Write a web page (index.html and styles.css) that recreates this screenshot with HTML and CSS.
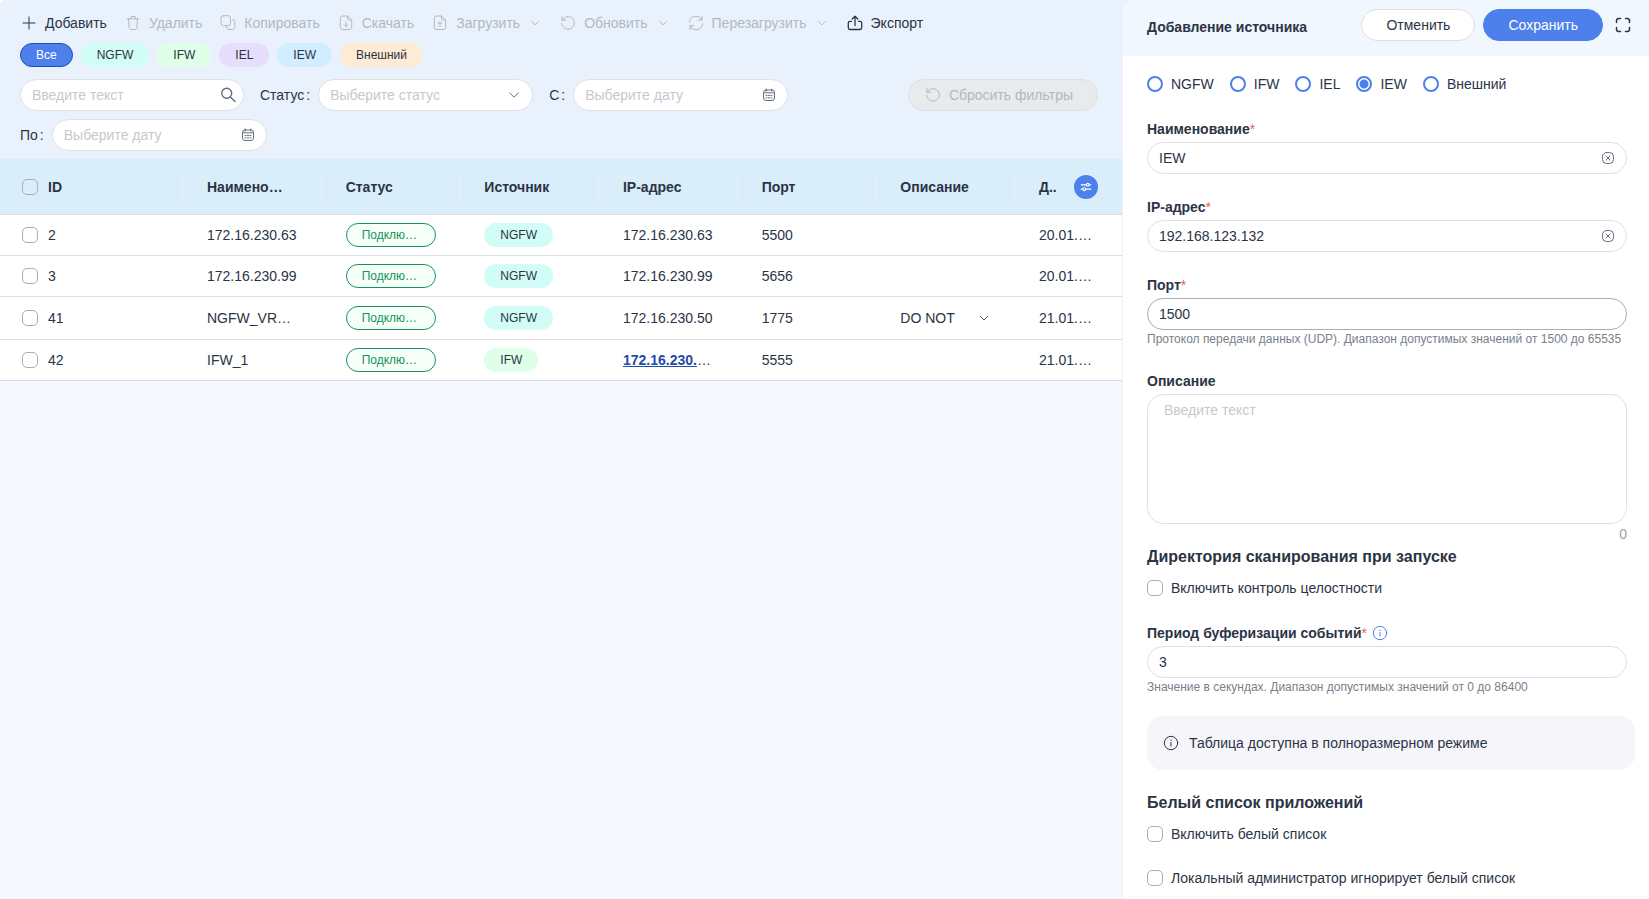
FILE: index.html
```html
<!DOCTYPE html>
<html lang="ru">
<head>
    <meta charset="UTF-8">
    <meta name="viewport" content="width=device-width, initial-scale=1.0">
    <title>Источники</title>
    <link rel="stylesheet" href="styles.css">
</head>
<body>
    <svg class="sprite" aria-hidden="true">
        <symbol id="plus" viewBox="0 0 16 16"><path d="M8 2v12M2 8h12"/></symbol>
        <symbol id="trash" viewBox="0 0 16 16"><path d="M2.200 3.800h11.600M5.400 3.600l.7-2.100h3.800l.7 2.100M3.500 4l.7 8.600c.1 1.200.8 1.900 2 1.900h3.600c1.200 0 1.900-.7 2-1.900L12.500 4"/></symbol>
        <symbol id="copy" viewBox="0 0 16 16"><rect x="1" y=".7" width="9.500" height="10" rx="2.500"/><path d="M12.500 4.900c1.500 0 2.300.8 2.300 2.300v4.600c0 1.700-.9 2.600-2.600 2.600H9c-1.700 0-2.700-.9-2.700-2.600v-1"/></symbol>
        <symbol id="file-down" viewBox="0 0 16 16"><path d="M9.500 1H5C3.200 1 2.300 1.900 2.300 3.700v8.100c0 1.800.9 2.700 2.700 2.700h6c1.800 0 2.700-.9 2.700-2.700V5L9.500 1v2.400c0 1.100.5 1.600 1.600 1.600h2.600M8 7v4.600M6.300 9.900L8 11.600l1.700-1.700"/></symbol>
        <symbol id="file-up" viewBox="0 0 16 16"><path d="M9.500 1H5C3.200 1 2.300 1.900 2.300 3.700v8.100c0 1.800.9 2.700 2.700 2.700h6c1.800 0 2.700-.9 2.700-2.700V5L9.500 1v2.400c0 1.100.5 1.600 1.600 1.600h2.600M8 11.600V7M6.300 8.700L8 7l1.700 1.700"/></symbol>
        <symbol id="undo" viewBox="0 0 16 16"><path d="M2 1.500v3.800h3.800M2.300 5.200A6.300 6.300 0 1 1 1.700 8.300"/></symbol>
        <symbol id="sync" viewBox="0 0 16 16"><path d="M1.500 7.300A6.400 6.400 0 0 1 13.700 5M14 1.500V5.200h-3.700M14.500 8.700A6.400 6.400 0 0 1 2.300 11M2 14.500v-3.700h3.700"/></symbol>
        <symbol id="export" viewBox="0 0 16 16"><path d="M4.500 6.300H3c-1.100 0-1.700.6-1.700 1.700v4.800c0 1.100.6 1.700 1.700 1.700h10c1.100 0 1.700-.6 1.700-1.700V8c0-1.100-.6-1.700-1.700-1.700h-1.500M8 10.500V1.500M5.200 4L8 1.300 10.800 4" stroke-width="1.300"/></symbol>
        <symbol id="chevron" viewBox="0 0 16 16"><path d="M3.800 6L8 10.200 12.200 6"/></symbol>
        <symbol id="search" viewBox="0 0 16 16"><circle cx="6.700" cy="6.200" r="5" stroke-width="1.400"/><path d="M10.400 9.900l4.600 4.600" stroke-width="1.400"/></symbol>
        <symbol id="calendar" viewBox="0 0 16 16"><rect x="2.500" y="3" width="11" height="10.500" rx="2.500"/><path d="M2.500 5.800h11M5.200 2V4M10.800 2V4"/><path d="M5 8.400h1.200M7.400 8.400h1.200M9.800 8.400H11M5 10.900h1.200M7.400 10.900h1.200M9.800 10.900H11"/></symbol>
        <symbol id="clear" viewBox="0 0 16 16"><rect x="2.500" y="2.500" width="11" height="11" rx="4"/><path d="M6 6l4 4M10 6l-4 4"/></symbol>
        <symbol id="sliders" viewBox="0 0 16 16"><path d="M2.500 5.500H8M12 5.500h1.500M2.500 10.500H4M8 10.500h5.500"/><circle cx="10" cy="5.500" r="1.600"/><circle cx="6" cy="10.500" r="1.600"/></symbol>
        <symbol id="expand" viewBox="0 0 16 16"><path d="M1.500 5.500V3.800c0-1.500.8-2.300 2.300-2.300h1.700M10.500 1.500h1.700c1.500 0 2.300.8 2.300 2.300v1.700M14.500 10.500v1.700c0 1.500-.8 2.300-2.300 2.300h-1.700M5.500 14.500H3.800c-1.500 0-2.300-.8-2.300-2.300v-1.700"/></symbol>
        <symbol id="info" viewBox="0 0 16 16"><circle cx="8" cy="8" r="6.700"/><path d="M8 7.300v3.700M8 4.900v.6"/></symbol>
    </svg>

    <div class="app">
        <main class="main">
            <div class="controls">
                <div class="toolbar">
                    <button class="tool" type="button"><svg class="icon"><use href="#plus"/></svg>Добавить</button>
                    <button class="tool" type="button" disabled><svg class="icon"><use href="#trash"/></svg>Удалить</button>
                    <button class="tool" type="button" disabled><svg class="icon"><use href="#copy"/></svg>Копировать</button>
                    <button class="tool" type="button" disabled><svg class="icon"><use href="#file-down"/></svg>Скачать</button>
                    <button class="tool" type="button" disabled><svg class="icon"><use href="#file-up"/></svg>Загрузить<svg class="icon arrow"><use href="#chevron"/></svg></button>
                    <button class="tool" type="button" disabled><svg class="icon"><use href="#undo"/></svg>Обновить<svg class="icon arrow"><use href="#chevron"/></svg></button>
                    <button class="tool" type="button" disabled><svg class="icon"><use href="#sync"/></svg>Перезагрузить<svg class="icon arrow"><use href="#chevron"/></svg></button>
                    <button class="tool" type="button"><svg class="icon"><use href="#export"/></svg>Экспорт</button>
                </div>

                <div class="pills">
                    <button class="tag tag-active" type="button">Все</button>
                    <button class="tag tag-ngfw" type="button">NGFW</button>
                    <button class="tag tag-ifw" type="button">IFW</button>
                    <button class="tag tag-iel" type="button">IEL</button>
                    <button class="tag tag-iew" type="button">IEW</button>
                    <button class="tag tag-ext" type="button">Внешний</button>
                </div>

                <div class="filter-bar">
                    <div class="filters">
                        <div class="box search-box">
                            <input class="input" type="text" placeholder="Введите текст" aria-label="Введите текст">
                            <svg class="icon box-icon"><use href="#search"/></svg>
                        </div>
                        <div class="filter">
                            <label for="status">Статус<span class="colon">:</span></label>
                            <div class="box">
                                <select class="input select" id="status"><option>Выберите статус</option></select>
                                <svg class="icon box-icon"><use href="#chevron"/></svg>
                            </div>
                        </div>
                        <div class="filter">
                            <label for="from">С<span class="colon">:</span></label>
                            <div class="box">
                                <input class="input" id="from" type="text" placeholder="Выберите дату">
                                <svg class="icon box-icon"><use href="#calendar"/></svg>
                            </div>
                        </div>
                        <div class="filter">
                            <label for="to">По<span class="colon">:</span></label>
                            <div class="box">
                                <input class="input" id="to" type="text" placeholder="Выберите дату">
                                <svg class="icon box-icon"><use href="#calendar"/></svg>
                            </div>
                        </div>
                    </div>
                    <button class="btn btn-reset" type="button" disabled><svg class="icon"><use href="#undo"/></svg>Сбросить фильтры</button>
                </div>
            </div>

            <table class="table">
                <colgroup>
                    <col class="col-id">
                    <col span="6">
                    <col class="col-date">
                </colgroup>
                <thead>
                    <tr>
                        <th><div class="id-cell"><input class="check" type="checkbox" aria-label="Выбрать все">ID</div></th>
                        <th>Наимено…</th>
                        <th>Статус</th>
                        <th>Источник</th>
                        <th>IP-адрес</th>
                        <th>Порт</th>
                        <th>Описание</th>
                        <th><div class="date-head">Д..<button class="settings" type="button" aria-label="Настройки"><svg class="icon"><use href="#sliders"/></svg></button></div></th>
                    </tr>
                </thead>
                <tbody>
                    <tr>
                        <td><div class="id-cell"><input class="check" type="checkbox" id="row2"><label for="row2">2</label></div></td>
                        <td>172.16.230.63</td>
                        <td><span class="tag tag-status">Подклю…</span></td>
                        <td><span class="tag tag-ngfw">NGFW</span></td>
                        <td>172.16.230.63</td>
                        <td>5500</td>
                        <td></td>
                        <td>20.01.…</td>
                    </tr>
                    <tr>
                        <td><div class="id-cell"><input class="check" type="checkbox" id="row3"><label for="row3">3</label></div></td>
                        <td>172.16.230.99</td>
                        <td><span class="tag tag-status">Подклю…</span></td>
                        <td><span class="tag tag-ngfw">NGFW</span></td>
                        <td>172.16.230.99</td>
                        <td>5656</td>
                        <td></td>
                        <td>20.01.…</td>
                    </tr>
                    <tr class="row-tall">
                        <td><div class="id-cell"><input class="check" type="checkbox" id="row41"><label for="row41">41</label></div></td>
                        <td>NGFW_VR…</td>
                        <td><span class="tag tag-status">Подклю…</span></td>
                        <td><span class="tag tag-ngfw">NGFW</span></td>
                        <td>172.16.230.50</td>
                        <td>1775</td>
                        <td><div class="more">DO NOT<svg class="icon arrow"><use href="#chevron"/></svg></div></td>
                        <td>21.01.…</td>
                    </tr>
                    <tr>
                        <td><div class="id-cell"><input class="check" type="checkbox" id="row42"><label for="row42">42</label></div></td>
                        <td>IFW_1</td>
                        <td><span class="tag tag-status">Подклю…</span></td>
                        <td><span class="tag tag-ifw">IFW</span></td>
                        <td><a class="ip-link" href="#">172.16.230.</a>…</td>
                        <td>5555</td>
                        <td></td>
                        <td>21.01.…</td>
                    </tr>
                </tbody>
            </table>
        </main>

        <aside class="panel">
            <header class="panel-head">
                <h2 class="panel-title">Добавление источника</h2>
                <button class="btn" type="button">Отменить</button>
                <button class="btn btn-primary" type="submit" form="source">Сохранить</button>
                <button class="icon-btn" type="button" aria-label="Развернуть"><svg class="icon"><use href="#expand"/></svg></button>
            </header>

            <form class="panel-body" id="source">
                <div class="radios">
                    <label class="option"><input class="radio" type="radio" name="kind">NGFW</label>
                    <label class="option"><input class="radio" type="radio" name="kind">IFW</label>
                    <label class="option"><input class="radio" type="radio" name="kind">IEL</label>
                    <label class="option"><input class="radio" type="radio" name="kind" checked>IEW</label>
                    <label class="option"><input class="radio" type="radio" name="kind">Внешний</label>
                </div>

                <div class="field">
                    <label class="label" for="name">Наименование<span class="required">*</span></label>
                    <div class="box">
                        <input class="input" id="name" type="text" value="IEW">
                        <svg class="icon box-icon"><use href="#clear"/></svg>
                    </div>
                </div>
                <div class="field">
                    <label class="label" for="ip">IP-адрес<span class="required">*</span></label>
                    <div class="box">
                        <input class="input" id="ip" type="text" value="192.168.123.132">
                        <svg class="icon box-icon"><use href="#clear"/></svg>
                    </div>
                </div>
                <div class="field">
                    <label class="label" for="port">Порт<span class="required">*</span></label>
                    <input class="input input-hover" id="port" type="text" value="1500">
                    <p class="hint">Протокол передачи данных (UDP). Диапазон допустимых значений от 1500 до 65535</p>
                </div>
                <div class="field field-text">
                    <label class="label" for="about">Описание</label>
                    <textarea class="input textarea" id="about" placeholder="Введите текст"></textarea>
                    <div class="counter">0</div>
                </div>

                <h3 class="section-title">Директория сканирования при запуске</h3>
                <label class="option option-row"><input class="check" type="checkbox">Включить контроль целостности</label>

                <div class="field field-last">
                    <div class="label-row">
                        <label class="label" for="period">Период буферизации событий<span class="required">*</span></label>
                        <svg class="icon info-icon"><use href="#info"/></svg>
                    </div>
                    <input class="input" id="period" type="text" value="3">
                    <p class="hint">Значение в секундах. Диапазон допустимых значений от 0 до 86400</p>
                </div>

                <div class="notice"><svg class="icon"><use href="#info"/></svg>Таблица доступна в полноразмерном режиме</div>

                <h3 class="section-title">Белый список приложений</h3>
                <label class="option option-row"><input class="check" type="checkbox">Включить белый список</label>
                <label class="option option-row"><input class="check" type="checkbox">Локальный администратор игнорирует белый список</label>
            </form>
        </aside>
    </div>
</body>
</html>
```
FILE: styles.css
```css
* {
    box-sizing: border-box;
}

body {
    margin: 0;
    background: #fff;
    color: #2b3445;
    font-family: "Liberation Sans", Arial, sans-serif;
    font-size: 14px;
    line-height: 22px;
}

button,
input,
select,
textarea {
    font: inherit;
    color: inherit;
    margin: 0;
}

button {
    cursor: pointer;
}

h2,
h3,
p {
    margin: 0;
}

.sprite {
    display: none;
}

.icon {
    width: 16px;
    height: 16px;
    flex: none;
    fill: none;
    stroke: currentColor;
    stroke-linecap: round;
    stroke-linejoin: round;
}

.arrow {
    width: 14px;
}

.app {
    display: flex;
    height: 100vh;
    overflow: hidden;
    background: #e9f2fc;
    border-top-left-radius: 6px;
}

.main {
    flex: 1;
    min-width: 0;
    background: #f5f9ff;
}

/* Toolbar and filters */
.controls {
    padding: 11px 24px 8px 20px;
    background: #e9f2fc;
}

.toolbar {
    display: flex;
    gap: 18px;
    height: 24px;
    margin-bottom: 8px;
    padding-left: 1px;
}

.tool {
    display: flex;
    align-items: center;
    gap: 8px;
    padding: 0;
    border: none;
    background: none;
    white-space: nowrap;
}

.tool:disabled {
    color: #b2b8c2;
}

.pills {
    display: flex;
    gap: 8px;
    margin-bottom: 12px;
}

.tag {
    display: inline-block;
    height: 24px;
    padding: 0 15px;
    border: 1px solid transparent;
    border-radius: 12px;
    font-size: 12px;
    line-height: 22px;
    vertical-align: middle;
    white-space: nowrap;
}

.tag-active {
    background: #4d80ea;
    border-color: #1d4fb8;
    color: #fff;
}

.tag-ngfw {
    background: #d2fdf6;
}

.tag-ifw {
    background: #e0ffe8;
}

.tag-iel {
    background: #e7defe;
}

.tag-iew {
    background: #d1edff;
}

.tag-ext {
    background: #feebd6;
}

.tag-status {
    width: 100%;
    background: #f6fff8;
    border-color: #13935f;
    color: #13935f;
}

.filter-bar {
    display: flex;
    align-items: flex-start;
    justify-content: space-between;
    gap: 16px;
}

.filters {
    display: flex;
    flex-wrap: wrap;
    gap: 8px 16px;
}

.filter {
    display: flex;
    align-items: center;
    gap: 8px;
}

.filter .box {
    width: 215px;
}

.colon {
    margin-left: 2px;
}

.box {
    position: relative;
}

.search-box {
    width: 224px;
}

.input {
    display: block;
    width: 100%;
    height: 32px;
    padding: 0 11px;
    border: 1px solid #dfe0e3;
    border-radius: 16px;
    background: #fff;
    outline: none;
}

.input::placeholder {
    color: #c6c9ce;
    opacity: 1;
}

.select {
    appearance: none;
    color: #c6c9ce;
}

.input-hover {
    border-color: #a9adb8;
}

.textarea {
    height: 130px;
    padding: 4px 16px;
    resize: none;
}

.box-icon {
    position: absolute;
    top: 8px;
    right: 11px;
    color: #676d7d;
}

.search-box .box-icon {
    right: 8px;
}

.btn {
    display: flex;
    align-items: center;
    gap: 8px;
    height: 32px;
    padding: 0 24px;
    border: 1px solid #dfe0e3;
    border-radius: 16px;
    background: #fff;
    white-space: nowrap;
}

.btn-primary {
    background: #4d80ea;
    border-color: #4d80ea;
    color: #fff;
}

.btn-reset {
    padding-left: 16px;
    background: #e8eaec;
    border-color: #dfe0e3;
    color: #b2b8c2;
}

/* Table */
.table {
    width: 100%;
    table-layout: fixed;
    border-collapse: separate;
    border-spacing: 0;
    background: #fff;
}

.col-id {
    width: 183px;
}

.col-date {
    width: 107px;
}

.table th,
.table td {
    padding: 0 24px;
    border-bottom: 1px solid #dcdee1;
    text-align: left;
    white-space: nowrap;
}

.table th {
    height: 56px;
    background: linear-gradient(#eef1f4, #eef1f4) right center / 1px 22px no-repeat #daedfb;
}

.table th:last-child {
    background: #daedfb;
}

.table td {
    height: 41px;
}

.row-tall td {
    height: 43px;
}

.table th:first-child,
.table td:first-child {
    padding-left: 22px;
}

.id-cell {
    display: flex;
    align-items: center;
    gap: 10px;
}

.date-head,
.more {
    display: flex;
    align-items: center;
    justify-content: space-between;
}

.settings {
    display: flex;
    align-items: center;
    justify-content: center;
    flex: none;
    width: 24px;
    height: 24px;
    padding: 0;
    border: none;
    border-radius: 50%;
    background: #4d80ea;
    color: #fff;
}

.settings .icon {
    width: 14px;
    height: 14px;
    stroke-width: 1.3;
}

.ip-link {
    color: #1f4ba5;
    font-weight: bold;
}

.check {
    appearance: none;
    flex: none;
    width: 16px;
    height: 16px;
    border: 1px solid #a9adb8;
    border-radius: 5px;
}

.radio {
    appearance: none;
    flex: none;
    width: 16px;
    height: 16px;
    border: 2px solid #4d80ea;
    border-radius: 50%;
    background: #fff;
}

.radio:checked {
    background: radial-gradient(#4d80ea 4px, #fff 5px);
}

/* Side panel */
.panel {
    width: 527px;
    flex: none;
    overflow: hidden;
    background: #fff;
    border-left: 1px solid #eff2f7;
    border-top-left-radius: 12px;
}

.panel-head {
    display: flex;
    align-items: center;
    gap: 8px;
    height: 56px;
    padding: 9px 18px 15px 24px;
    background: #f0f7ff;
}

.panel-title {
    flex: 1;
    padding-top: 4px;
    font-size: 14px;
}

.icon-btn {
    display: flex;
    padding: 0;
    margin-left: 4px;
    border: none;
    background: none;
}

.icon-btn .icon {
    stroke-width: 1.5;
}

.panel-body {
    padding: 16px 22px 0 24px;
}

.radios {
    display: flex;
    gap: 16px;
    margin-bottom: 22px;
}

.option {
    display: flex;
    align-items: center;
    gap: 8px;
    height: 24px;
}

.option-row {
    margin-bottom: 20px;
}

.field {
    margin-bottom: 22px;
}

.field-text {
    margin-bottom: 2px;
}

.field-last {
    margin-top: 22px;
    margin-bottom: 20px;
}

.label {
    display: block;
    margin-bottom: 2px;
    font-weight: bold;
}

.label-row {
    display: flex;
    gap: 5px;
}

.required {
    color: #f5584f;
    font-weight: normal;
}

.info-icon {
    margin-top: 3px;
    color: #4d80ea;
}

.hint {
    color: #787f8b;
    font-size: 12px;
    line-height: 18px;
}

.counter {
    color: #9aa0aa;
    line-height: 20px;
    text-align: right;
}

.notice {
    display: flex;
    align-items: center;
    gap: 10px;
    margin: 0 -8px 22px 0;
    padding: 16px;
    border-radius: 16px;
    background: #f5f5fa;
}

.section-title {
    margin-bottom: 8px;
    font-size: 16px;
}
```
